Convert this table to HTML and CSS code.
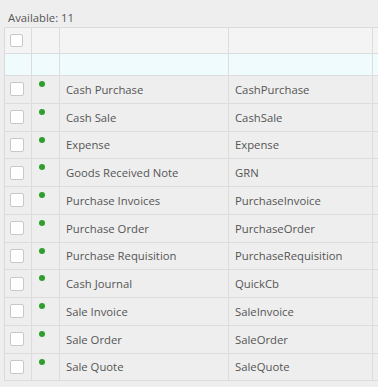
FILE: index.html
```html
<!DOCTYPE html>
<html lang="en">
<head>
    <meta charset="UTF-8">
    <title>Document Types</title>
    <link rel="stylesheet" href="styles.css">
</head>
<body>
    <div class="list-panel">
        <div class="available">Available: 11</div>

        <div class="grid">
            <div class="grid-row grid-header">
                <div class="cell cell-check"><span class="checkbox"></span></div>
                <div class="cell cell-status"></div>
                <div class="cell cell-name"></div>
                <div class="cell cell-code"></div>
                <div class="cell cell-extra"></div>
            </div>
            <div class="grid-row grid-filter">
                <div class="cell cell-check"></div>
                <div class="cell cell-status"></div>
                <div class="cell cell-name"></div>
                <div class="cell cell-code"></div>
                <div class="cell cell-extra"></div>
            </div>

            <div class="grid-row">
                <div class="cell cell-check"><span class="checkbox"></span></div>
                <div class="cell cell-status"><span class="dot"></span></div>
                <div class="cell cell-name">Cash Purchase</div>
                <div class="cell cell-code">CashPurchase</div>
                <div class="cell cell-extra"></div>
            </div>
            <div class="grid-row">
                <div class="cell cell-check"><span class="checkbox"></span></div>
                <div class="cell cell-status"><span class="dot"></span></div>
                <div class="cell cell-name">Cash Sale</div>
                <div class="cell cell-code">CashSale</div>
                <div class="cell cell-extra"></div>
            </div>
            <div class="grid-row">
                <div class="cell cell-check"><span class="checkbox"></span></div>
                <div class="cell cell-status"><span class="dot"></span></div>
                <div class="cell cell-name">Expense</div>
                <div class="cell cell-code">Expense</div>
                <div class="cell cell-extra"></div>
            </div>
            <div class="grid-row">
                <div class="cell cell-check"><span class="checkbox"></span></div>
                <div class="cell cell-status"><span class="dot"></span></div>
                <div class="cell cell-name">Goods Received Note</div>
                <div class="cell cell-code">GRN</div>
                <div class="cell cell-extra"></div>
            </div>
            <div class="grid-row">
                <div class="cell cell-check"><span class="checkbox"></span></div>
                <div class="cell cell-status"><span class="dot"></span></div>
                <div class="cell cell-name">Purchase Invoices</div>
                <div class="cell cell-code">PurchaseInvoice</div>
                <div class="cell cell-extra"></div>
            </div>
            <div class="grid-row">
                <div class="cell cell-check"><span class="checkbox"></span></div>
                <div class="cell cell-status"><span class="dot"></span></div>
                <div class="cell cell-name">Purchase Order</div>
                <div class="cell cell-code">PurchaseOrder</div>
                <div class="cell cell-extra"></div>
            </div>
            <div class="grid-row">
                <div class="cell cell-check"><span class="checkbox"></span></div>
                <div class="cell cell-status"><span class="dot"></span></div>
                <div class="cell cell-name">Purchase Requisition</div>
                <div class="cell cell-code">PurchaseRequisition</div>
                <div class="cell cell-extra"></div>
            </div>
            <div class="grid-row">
                <div class="cell cell-check"><span class="checkbox"></span></div>
                <div class="cell cell-status"><span class="dot"></span></div>
                <div class="cell cell-name">Cash Journal</div>
                <div class="cell cell-code">QuickCb</div>
                <div class="cell cell-extra"></div>
            </div>
            <div class="grid-row">
                <div class="cell cell-check"><span class="checkbox"></span></div>
                <div class="cell cell-status"><span class="dot"></span></div>
                <div class="cell cell-name">Sale Invoice</div>
                <div class="cell cell-code">SaleInvoice</div>
                <div class="cell cell-extra"></div>
            </div>
            <div class="grid-row">
                <div class="cell cell-check"><span class="checkbox"></span></div>
                <div class="cell cell-status"><span class="dot"></span></div>
                <div class="cell cell-name">Sale Order</div>
                <div class="cell cell-code">SaleOrder</div>
                <div class="cell cell-extra"></div>
            </div>
            <div class="grid-row">
                <div class="cell cell-check"><span class="checkbox"></span></div>
                <div class="cell cell-status"><span class="dot"></span></div>
                <div class="cell cell-name">Sale Quote</div>
                <div class="cell cell-code">SaleQuote</div>
                <div class="cell cell-extra"></div>
            </div>
        </div>
    </div>
</body>
</html>
```

FILE: styles.css
```css
* {
    margin: 0;
    padding: 0;
    box-sizing: border-box;
}

body {
    background: #eeeeee;
    font-family: "Open Sans", "Noto Sans", sans-serif;
    font-size: 11.3px;
    color: #555555;
    overflow: hidden;
    height: 100vh;
}

.list-panel {
    padding: 9px 0 0 4px;
    overflow: hidden;
}

.available {
    height: 18px;
    line-height: 18px;
    padding-left: 4px;
    color: #555555;
}

.grid {
    border-left: 1px solid #dadada;
    border-top: 1px solid #dadada;
}

.grid-row {
    display: grid;
    grid-template-columns: 27px 28px 169px 144px 32px;
    height: 27.75px;
    border-bottom: 1px solid #dcdcdc;
    background: #eeeeee;
}

.grid-header {
    height: 26px;
    background: #f4f4f4;
}

.grid-filter {
    height: 22px;
    background: #effbfc;
}

.cell {
    border-right: 1px solid #dcdcdc;
    display: flex;
    align-items: center;
    padding-left: 6px;
    white-space: nowrap;
    overflow: hidden;
}

.cell-check {
    padding-left: 5px;
}

.cell-status {
    align-items: flex-start;
    padding-left: 7px;
    padding-top: 5px;
}

.checkbox {
    display: block;
    width: 14px;
    height: 14px;
    background: #ffffff;
    border: 1px solid #c8c8c8;
    border-radius: 2px;
}

.grid-header .checkbox {
    width: 13px;
    height: 13px;
}

.dot {
    display: block;
    width: 6px;
    height: 6px;
    border-radius: 50%;
    background: #2e9e2e;
}
```
